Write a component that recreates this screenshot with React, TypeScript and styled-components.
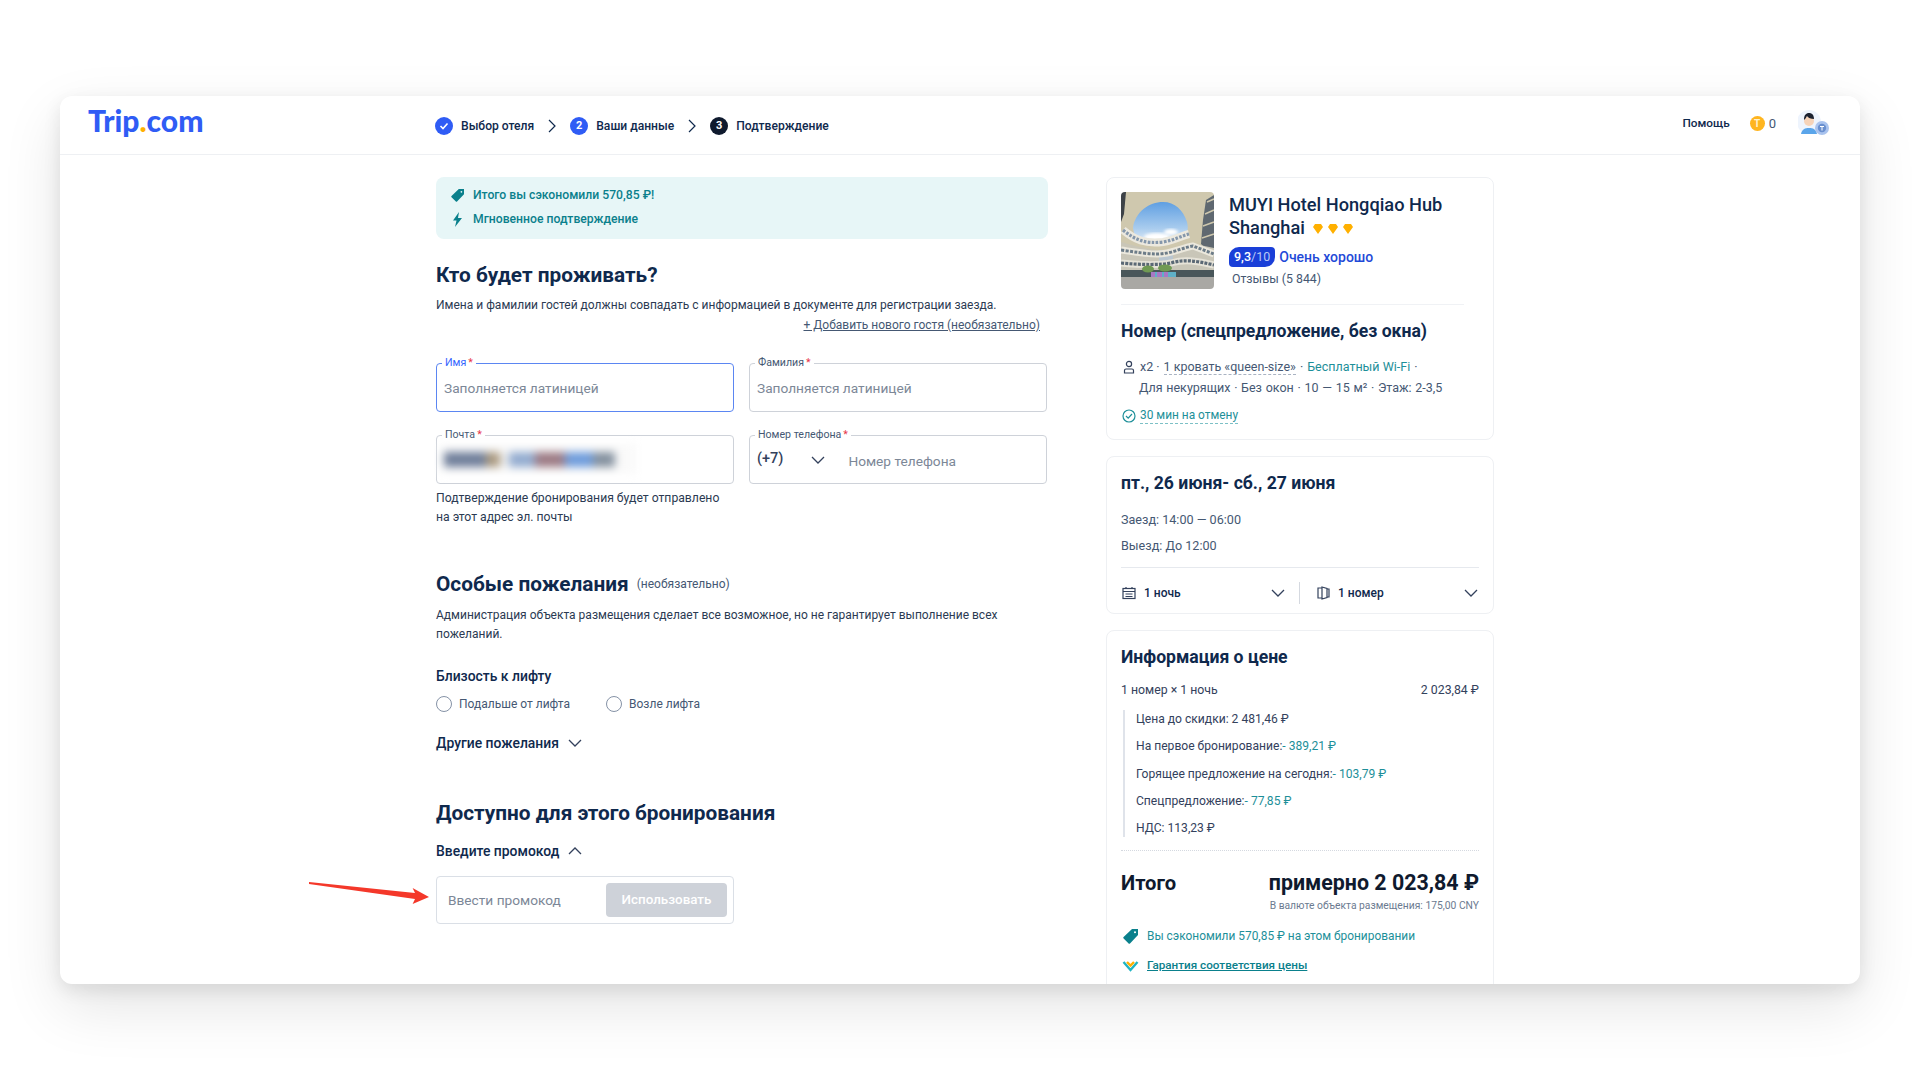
import React from 'react';
import styled, { createGlobalStyle } from 'styled-components';

const GlobalStyle = createGlobalStyle`
  html, body {
    margin: 0;
    padding: 0;
    height: 1080px;
    overflow: hidden;
    background: #fff;
    font-family: "Roboto", "Noto Sans", sans-serif;
    color: #0f294d;
  }
  * { box-sizing: border-box; }
`;

const Page = styled.div`
  padding: 96px 60px 0;
`;

const Window = styled.div`
  position: relative;
  height: 888px;
  background: #fff;
  border-radius: 12px;
  box-shadow: 0 6px 18px rgba(0, 0, 0, 0.09), 0 22px 60px rgba(0, 0, 0, 0.11);
  overflow: hidden;
`;

const Header = styled.header`
  display: flex;
  align-items: center;
  height: 59px;
  padding: 0 28px;
  border-bottom: 1px solid #eef0f3;
`;

const Logo = styled.div`
  width: 347px;
  margin-top: -10px;
  font: 900 30px/36px "Lato", sans-serif;
  color: #2f5cf5;
  span { color: #ffb000; }
`;

const Steps = styled.nav`
  display: flex;
  align-items: center;
  margin-top: 1px;
`;

const StepBadge = styled.span<{ $dark?: boolean }>`
  display: flex;
  align-items: center;
  justify-content: center;
  width: 18px;
  height: 18px;
  margin-right: 8px;
  border-radius: 50%;
  background: ${p => (p.$dark ? '#0f1a2e' : '#2f5cf5')};
  color: #fff;
  font-size: 11px;
  font-weight: 700;
`;

const StepLabel = styled.span`
  font-size: 12.1px;
  font-weight: 500;
  color: #0f294d;
`;

const StepArrow = styled.svg`
  width: 12px;
  height: 16px;
  margin: 0 12px;
  fill: none;
  stroke: #0f294d;
  stroke-width: 1.2;
`;

const HeaderRight = styled.div`
  display: flex;
  align-items: center;
  margin-left: auto;
  margin-right: 2px;
  margin-top: -4px;
`;

const Help = styled.span`
  font-size: 11.8px;
  font-weight: 500;
  margin-right: 20px;
`;

const Coin = styled.span`
  display: flex;
  align-items: center;
  justify-content: center;
  width: 15px;
  height: 15px;
  border-radius: 50%;
  background: #ffb51f;
  color: #fff3cf;
  font-size: 10px;
  font-weight: 700;
  margin-right: 4px;
`;

const CoinCount = styled.span`
  font-size: 13px;
  margin-right: 22px;
  color: #455873;
`;

const Body = styled.main`
  display: flex;
  gap: 58px;
  padding: 22px 0 0 376px;
`;

const LeftColumn = styled.section`
  width: 612px;
`;

const RightColumn = styled.aside`
  display: flex;
  flex-direction: column;
  gap: 16px;
  width: 388px;
`;

const Banner = styled.div`
  display: flex;
  flex-direction: column;
  justify-content: center;
  gap: 7px;
  height: 62px;
  padding: 0 15px 1px;
  border-radius: 8px;
  background: #e7f6f7;
`;

const BannerRow = styled.div`
  display: flex;
  align-items: center;
  gap: 9px;
  font-size: 12.2px;
  line-height: 17px;
  font-weight: 500;
  color: #0a808c;
`;

const BannerIcon = styled.svg`
  width: 13px;
  height: 15px;
  fill: #0a808c;
`;

const Heading = styled.h2<{ $top: number }>`
  margin: ${p => p.$top}px 0 0;
  font-size: 20.8px;
  line-height: 28px;
  font-weight: 700;
  color: #0f294d;
`;

const Text = styled.p<{ $top: number }>`
  margin: ${p => p.$top}px 0 0;
  font-size: 12px;
  line-height: 19px;
  color: #2b3a52;
`;

const AddGuest = styled.a`
  display: block;
  margin: 1px 8px 0 0;
  text-align: right;
  font-size: 12px;
  line-height: 19px;
  color: #455873;
  text-decoration: underline;
`;

const FieldGrid = styled.div`
  display: grid;
  grid-template-columns: 298px 298px;
  gap: 23px 15px;
  margin-top: 27.5px;
`;

const Field = styled.div<{ $active?: boolean }>`
  position: relative;
  display: flex;
  align-items: center;
  height: 49px;
  padding: 2px 7px 0;
  border: 1px solid ${p => (p.$active ? '#5b86f2' : '#ced2d9')};
  border-radius: 4px;
  font-size: 13.7px;
  color: #7c8797;
`;

const FieldLabel = styled.label<{ $active?: boolean }>`
  position: absolute;
  top: -8px;
  left: 5px;
  padding: 0 3px;
  background: #fff;
  font-size: 10.6px;
  line-height: 14px;
  color: ${p => (p.$active ? '#3264ff' : '#455873')};
  i { font-style: normal; color: #e8364a; margin-left: 2px; }
`;

const Blurred = styled.div`
  display: flex;
  align-items: center;
  width: 196px;
  height: 30px;
  padding: 0 4px;
  margin: -2px 0 0 -4px;
  background: #fafafa;
  filter: blur(4px);
`;

const BlurSpot = styled.span<{ $w: number; $c: string }>`
  flex: 0 0 ${p => p.$w}px;
  height: 15px;
  background: ${p => p.$c};
`;

const PhoneCode = styled.span`
  font-size: 14.5px;
  font-weight: 500;
  color: #33415c;
  margin-top: -4px;
`;

const PhonePlaceholder = styled.span`
  margin: 2px 0 0 23px;
`;

const Chevron = styled.svg<{ $left?: number }>`
  flex: none;
  width: 14px;
  height: 10px;
  margin-left: ${p => p.$left ?? 0}px;
  fill: none;
  stroke: #33415c;
  stroke-width: 1.3;
`;

const EmailNote = styled.p`
  width: 298px;
  margin: 5px 0 0;
  font-size: 12.2px;
  line-height: 19px;
  color: #2b3a52;
`;

const OptionalHeading = styled.div`
  display: flex;
  align-items: center;
  gap: 8px;
  margin-top: 43px;
  h2 { margin: 0; font-size: 20.8px; line-height: 28px; font-weight: 700; color: #0f294d; }
  span { font-size: 12px; color: #455873; }
`;

const Label = styled.div<{ $top: number }>`
  display: flex;
  align-items: center;
  gap: 9px;
  margin-top: ${p => p.$top}px;
  font-size: 13.9px;
  line-height: 20px;
  font-weight: 500;
  color: #0f294d;
`;

const RadioRow = styled.div`
  display: flex;
  gap: 36px;
  margin-top: 9px;
`;

const Radio = styled.label`
  display: flex;
  align-items: center;
  gap: 7px;
  font-size: 12px;
  line-height: 18px;
  color: #455873;
  &::before {
    content: '';
    width: 14px;
    height: 14px;
    border: 1px solid #8592a6;
    border-radius: 50%;
  }
`;

const PromoBox = styled.div`
  display: flex;
  align-items: center;
  justify-content: space-between;
  width: 298px;
  height: 48px;
  margin-top: 15px;
  padding: 0 6px 0 11px;
  border: 1px solid #dadfe6;
  border-radius: 4px;
  font-size: 13.7px;
  color: #7c8797;
`;

const PromoButton = styled.button`
  width: 121px;
  height: 34px;
  border: none;
  border-radius: 4px;
  background: #ced2d9;
  color: #fff;
  font: 500 13.4px "Roboto", sans-serif;
`;

const RedArrow = styled.svg`
  position: absolute;
  left: 245px;
  top: 780px;
  width: 130px;
  height: 30px;
`;

const Card = styled.div<{ $bottom: number }>`
  padding: 14px 14px ${p => p.$bottom}px;
  background: #fff;
  border: 1px solid #eef0f3;
  border-radius: 8px;
`;

const HotelRow = styled.div`
  display: flex;
  gap: 15px;
  padding-bottom: 15px;
  margin-right: 15px;
  border-bottom: 1px solid #f0f2f5;
`;

const Photo = styled.svg`
  flex: none;
  width: 93px;
  height: 97px;
  border-radius: 4px;
`;

const HotelInfo = styled.div`
  display: flex;
  flex-direction: column;
  align-items: flex-start;
`;

const HotelName = styled.div`
  margin-top: 1px;
  font-size: 18.2px;
  line-height: 23px;
  font-weight: 500;
  color: #0f294d;
  svg { width: 41px; height: 10px; margin-left: 8px; fill: #ffb000; }
`;

const Rating = styled.div`
  display: flex;
  align-items: center;
  gap: 4px;
  margin-top: 8px;
  font-size: 14px;
  font-weight: 500;
  color: #1f4ad8;
`;

const RatingBadge = styled.span`
  padding: 0 5px;
  height: 20px;
  line-height: 20px;
  border-radius: 10px 4px 10px 4px;
  background: #1a3fd8;
  color: #fff;
  font-size: 12.5px;
  font-weight: 500;
  small { font-size: 12.5px; font-weight: 400; color: #b9c7f5; }
`;

const Reviews = styled.div`
  margin: 3px 0 0 3px;
  font-size: 12.3px;
  line-height: 18px;
  color: #455873;
`;

const CardTitle = styled.h3<{ $top?: number }>`
  margin: ${p => p.$top ?? 0}px 0 0;
  font-size: 17.6px;
  line-height: 24px;
  font-weight: 700;
  color: #0f294d;
`;

const RoomRow = styled.div<{ $top: number; $indent?: boolean }>`
  display: flex;
  align-items: center;
  gap: 4px;
  margin-top: ${p => p.$top}px;
  padding-left: ${p => (p.$indent ? 18 : 1)}px;
  font-size: 12.5px;
  line-height: 18px;
  word-spacing: ${p => (p.$indent ? 0.6 : 0)}px;
  color: #455873;
  white-space: nowrap;
  b { font-weight: 400; color: #1d8f99; }
  u { text-decoration: none; border-bottom: 1px dashed #a9b3c2; line-height: 15px; }
`;

const RowIcon = styled.svg<{ $teal?: boolean }>`
  flex: none;
  width: 14px;
  height: 14px;
  fill: none;
  stroke: ${p => (p.$teal ? '#1d8f99' : '#33415c')};
  stroke-width: 1.2;
`;

const CancelLink = styled.span`
  font-size: 11.9px;
  color: #1d8f99;
  line-height: 15px;
  border-bottom: 1px dashed #7cc0c6;
`;

const Muted = styled.div<{ $top: number }>`
  margin-top: ${p => p.$top}px;
  font-size: 12.6px;
  line-height: 18px;
  color: #455873;
`;

const Rule = styled.div<{ $top: number; $dotted?: boolean }>`
  margin-top: ${p => p.$top}px;
  border-top: 1px ${p => (p.$dotted ? 'dotted #d5d9e0' : 'solid #e6e9ee')};
`;

const SelectRow = styled.div`
  display: flex;
  align-items: center;
  margin-top: 14px;
  font-size: 12px;
  line-height: 22px;
  font-weight: 500;
  color: #0f294d;
`;

const SelectCell = styled.div<{ $width: number; $pad: number }>`
  display: flex;
  align-items: center;
  gap: 8px;
  width: ${p => p.$width}px;
  padding: 0 0 0 ${p => p.$pad}px;
  svg:last-child { margin-left: auto; }
`;

const SelectDivider = styled.span`
  width: 1px;
  height: 22px;
  margin: 0 14px;
  background: #d5d9e0;
`;

const SpaceRow = styled.div`
  display: flex;
  justify-content: space-between;
  margin-top: 12px;
  font-size: 12.3px;
  line-height: 18px;
  color: #33415c;
`;

const Breakdown = styled.div`
  margin: 11px 0 0 2px;
  padding-left: 11px;
  border-left: 2px solid #dfe3ea;
`;

const BreakdownRow = styled.div`
  height: 27.3px;
  font-size: 12.1px;
  line-height: 18px;
  color: #33415c;
  &:last-child { height: 18px; }
  b { font-weight: 400; color: #1d8f99; }
`;

const TotalRow = styled.div`
  display: flex;
  justify-content: space-between;
  align-items: baseline;
  margin-top: 18px;
  font-size: 21.4px;
  line-height: 28px;
  font-weight: 700;
  color: #0f1a2e;
  span:first-child { font-size: 20.2px; }
`;

const Currency = styled.div`
  margin-top: 2px;
  text-align: right;
  font-size: 10.3px;
  line-height: 14px;
  color: #6b7a90;
`;

const SavingRow = styled.div<{ $top: number }>`
  display: flex;
  align-items: center;
  gap: 8px;
  margin-top: ${p => p.$top}px;
  padding-left: 1px;
  font-size: 11.9px;
  line-height: 18px;
  color: #1d8f99;
  svg { flex: none; width: 17px; height: 15px; }
  a { font-size: 11.7px; font-weight: 500; color: #0a808c; text-decoration: underline; }
`;

const ChevronDown = ({ left }: { left?: number }) => (
  <Chevron $left={left} viewBox="0 0 14 10">
    <path d="M1 2l6 6 6-6" />
  </Chevron>
);

const ChevronUp = ({ left }: { left?: number }) => (
  <Chevron $left={left} viewBox="0 0 14 10">
    <path d="M1 8l6-6 6 6" />
  </Chevron>
);

const Arrow = () => (
  <StepArrow viewBox="0 0 12 16">
    <path d="M3 2l6 6-6 6" />
  </StepArrow>
);

const TagPath = 'M9 0h6v6l-8 8.5a1 1 0 0 1-1.4 0L.6 9.4a1 1 0 0 1 0-1.4zm3 2.2a1 1 0 1 0 0 2 1 1 0 0 0 0-2z';

const HotelPhoto = () => (
  <Photo viewBox="0 0 93 97">
    <defs>
      <linearGradient id="sky" x1="0" y1="0" x2="0" y2="1">
        <stop offset="0" stopColor="#5f9fe2" />
        <stop offset="0.6" stopColor="#a9ccee" />
        <stop offset="1" stopColor="#eef3f8" />
      </linearGradient>
      <filter id="soft"><feGaussianBlur stdDeviation="1.4" /></filter>
      <filter id="photo"><feGaussianBlur stdDeviation="0.4" /></filter>
    </defs>
    <g filter="url(#photo)">
      <rect width="93" height="97" fill="#cfc8ae" />
      <path d="M12 36C14 20 28 10 42 10c12 0 20 8 24 20 2 8 0 14-6 16l-20 8-26-8z" fill="url(#sky)" />
      <ellipse cx="36" cy="45" rx="13" ry="4" fill="#fff" filter="url(#soft)" />
      <ellipse cx="50" cy="40" rx="7" ry="3" fill="#fff" filter="url(#soft)" />
      <path d="M0 0h5L3 22 0 30z" fill="#3e4347" />
      <path d="M93 3l-8 5-3 20-2 24 13 12z" fill="#5e6870" />
      <path d="M86 10l7-3M84 22l9-4M82 34l11-4M81 46l12-4" stroke="#cfc8ae" strokeWidth="1.5" fill="none" />
      <path d="M0 50l14 4 30 6 30-8 19 4v30H0z" fill="#c9c6b8" />
      <path d="M2 38c12 10 22 14 40 12 12-2 18-6 26-8" stroke="#ece9df" strokeWidth="8" fill="none" />
      <path d="M2 38c12 10 22 14 40 12 12-2 18-6 26-8" stroke="#8597ab" strokeWidth="3.2" strokeDasharray="2.6 1.4" fill="none" />
      <rect x="38" y="58" width="14" height="16" fill="#b9c6d0" />
      <path d="M0 58c14 2 26 4 36 4 14 0 24-6 36-8l21 8" stroke="#ebe8dd" strokeWidth="7" fill="none" />
      <path d="M0 58c14 2 26 4 36 4 14 0 24-6 36-8l21 8" stroke="#6c7b88" strokeWidth="3" strokeDasharray="3 1.4" fill="none" />
      <path d="M0 71c20 2 40 2 50 0 14-4 26-2 43 2" stroke="#e6e3d8" strokeWidth="7" fill="none" />
      <path d="M0 71c20 2 40 2 50 0 14-4 26-2 43 2" stroke="#5a6874" strokeWidth="3.2" strokeDasharray="3 1.2" fill="none" />
      <rect x="0" y="78" width="93" height="7" fill="#4a575a" />
      <ellipse cx="27" cy="77" rx="6" ry="3.5" fill="#6f9a52" />
      <ellipse cx="44" cy="76" rx="7" ry="3.5" fill="#6f9a52" />
      <path d="M30 80h4v5h-4zM36 80h5v5h-5zM43 80h4v5h-4z" fill="#a878c4" />
      <path d="M34 80h2v5h-2zM41 80h2v5h-2zM47 80h8v5h-8z" fill="#5fb0c8" />
      <rect x="0" y="85" width="93" height="12" fill="#a9a8a4" />
    </g>
  </Photo>
);

export default function App() {
  return (
    <>
      <GlobalStyle />
      <Page>
        <Window>
          <Header>
            <Logo>Trip<span>.</span>com</Logo>
            <Steps>
              <StepBadge>
                <svg width="10" height="10" viewBox="0 0 10 10" fill="none" stroke="#fff" strokeWidth="1.6">
                  <path d="M1.5 5l2.5 2.5 4.5-5" />
                </svg>
              </StepBadge>
              <StepLabel>Выбор отеля</StepLabel>
              <Arrow />
              <StepBadge>2</StepBadge>
              <StepLabel>Ваши данные</StepLabel>
              <Arrow />
              <StepBadge $dark>3</StepBadge>
              <StepLabel>Подтверждение</StepLabel>
            </Steps>
            <HeaderRight>
              <Help>Помощь</Help>
              <Coin>T</Coin>
              <CoinCount>0</CoinCount>
              <svg width="32" height="28" viewBox="0 0 32 28">
                <circle cx="11" cy="13" r="12" fill="#eef4fd" />
                <path d="M3 25c1-5 4-6 8-6s7 1 8 6z" fill="#5aa5ea" />
                <circle cx="11" cy="12" r="5" fill="#f6d3b8" />
                <path d="M6 11c0-5 2-7 5-7s5 2 5 6c-3 0-6-1-7-3-1 2-2 3-3 4z" fill="#1c2230" />
                <circle cx="24" cy="19" r="7" fill="#a9c3ee" />
                <circle cx="24" cy="19" r="4.2" fill="#6a90cf" />
                <path d="M22 17.5h4M24 17.5v4" stroke="#fff" strokeWidth="1" />
              </svg>
            </HeaderRight>
          </Header>
          <Body>
            <LeftColumn>
              <Banner>
                <BannerRow>
                  <BannerIcon viewBox="0 0 15 15"><path fillRule="evenodd" d={TagPath} /></BannerIcon>
                  Итого вы сэкономили 570,85 ₽!
                </BannerRow>
                <BannerRow>
                  <BannerIcon viewBox="0 0 13 15"><path d="M8 0L2 8.5h3.5L4 15l7-9H7z" /></BannerIcon>
                  Мгновенное подтверждение
                </BannerRow>
              </Banner>
              <Heading $top={22}>Кто будет проживать?</Heading>
              <Text $top={7}>Имена и фамилии гостей должны совпадать с информацией в документе для регистрации заезда.</Text>
              <AddGuest>+ Добавить нового гостя (необязательно)</AddGuest>
              <FieldGrid>
                <Field $active>
                  <FieldLabel $active>Имя<i>*</i></FieldLabel>
                  Заполняется латиницей
                </Field>
                <Field>
                  <FieldLabel>Фамилия<i>*</i></FieldLabel>
                  Заполняется латиницей
                </Field>
                <Field>
                  <FieldLabel>Почта<i>*</i></FieldLabel>
                  <Blurred>
                    <BlurSpot $w={42} $c="#6f7e9a" />
                    <BlurSpot $w={14} $c="#ab9a80" />
                    <BlurSpot $w={9} $c="#f0f0f0" />
                    <BlurSpot $w={26} $c="#93acd0" />
                    <BlurSpot $w={30} $c="#9c7a84" />
                    <BlurSpot $w={28} $c="#6e9cdc" />
                    <BlurSpot $w={22} $c="#84919f" />
                  </Blurred>
                </Field>
                <Field>
                  <FieldLabel>Номер телефона<i>*</i></FieldLabel>
                  <PhoneCode>(+7)</PhoneCode>
                  <ChevronDown left={28} />
                  <PhonePlaceholder>Номер телефона</PhonePlaceholder>
                </Field>
              </FieldGrid>
              <EmailNote>Подтверждение бронирования будет отправлено на этот адрес эл. почты</EmailNote>
              <OptionalHeading>
                <h2>Особые пожелания</h2>
                <span>(необязательно)</span>
              </OptionalHeading>
              <Text $top={8.5}>Администрация объекта размещения сделает все возможное, но не гарантирует выполнение всех пожеланий.</Text>
              <Label $top={21.5}>Близость к лифту</Label>
              <RadioRow>
                <Radio>Подальше от лифта</Radio>
                <Radio>Возле лифта</Radio>
              </RadioRow>
              <Label $top={20}>Другие пожелания <ChevronDown /></Label>
              <Heading $top={46}>Доступно для этого бронирования</Heading>
              <Label $top={14}>Введите промокод <ChevronUp /></Label>
              <PromoBox>
                Ввести промокод
                <PromoButton>Использовать</PromoButton>
              </PromoBox>
            </LeftColumn>
            <RightColumn>
              <Card $bottom={15}>
                <HotelRow>
                  <HotelPhoto />
                  <HotelInfo>
                    <HotelName>
                      MUYI Hotel Hongqiao Hub<br />Shanghai
                      <svg viewBox="0 0 41 10">
                        <path d="M2 0h6l2 3-5 7-5-7zM17 0h6l2 3-5 7-5-7zM32 0h6l2 3-5 7-5-7z" />
                      </svg>
                    </HotelName>
                    <Rating>
                      <RatingBadge>9,3<small>/10</small></RatingBadge>
                      Очень хорошо
                    </Rating>
                    <Reviews>Отзывы (5 844)</Reviews>
                  </HotelInfo>
                </HotelRow>
                <CardTitle $top={14}>Номер (спецпредложение, без окна)</CardTitle>
                <RoomRow $top={15}>
                  <RowIcon viewBox="0 0 14 14">
                    <circle cx="7" cy="4" r="2.6" />
                    <path d="M2.5 13v-2.5a1.5 1.5 0 0 1 1.5-1.5h6a1.5 1.5 0 0 1 1.5 1.5V13z" />
                  </RowIcon>
                  x2 · <u>1 кровать «queen-size»</u> · <b>Бесплатный Wi-Fi</b> ·
                </RoomRow>
                <RoomRow $top={3} $indent>Для некурящих · Без окон · 10 — 15 м² · Этаж: 2-3,5</RoomRow>
                <RoomRow $top={11}>
                  <RowIcon $teal viewBox="0 0 14 14">
                    <circle cx="7" cy="7" r="6" />
                    <path d="M4 7l2.2 2.2L10 5" />
                  </RowIcon>
                  <CancelLink>30 мин на отмену</CancelLink>
                </RoomRow>
              </Card>
              <Card $bottom={9}>
                <CardTitle>пт., 26 июня- сб., 27 июня</CardTitle>
                <Muted $top={16}>Заезд: 14:00 — 06:00</Muted>
                <Muted $top={8}>Выезд: До 12:00</Muted>
                <Rule $top={12} />
                <SelectRow>
                  <SelectCell $width={164} $pad={1}>
                    <RowIcon viewBox="0 0 14 14">
                      <rect x="1" y="2.5" width="12" height="10" />
                      <path d="M1 5.5h12M4 1v2M10 1v2M3.5 8h7M3.5 10.5h7" />
                    </RowIcon>
                    1 ночь
                    <ChevronDown />
                  </SelectCell>
                  <SelectDivider />
                  <SelectCell $width={164} $pad={2}>
                    <RowIcon viewBox="0 0 14 14">
                      <path d="M6 2H2v10h4M6 1l5 1.5v9L6 13zM11 3h2v8h-2" />
                    </RowIcon>
                    1 номер
                    <ChevronDown />
                  </SelectCell>
                </SelectRow>
              </Card>
              <Card $bottom={40}>
                <CardTitle>Информация о цене</CardTitle>
                <SpaceRow><span>1 номер × 1 ночь</span><span>2 023,84 ₽</span></SpaceRow>
                <Breakdown>
                  <BreakdownRow>Цена до скидки: 2 481,46 ₽</BreakdownRow>
                  <BreakdownRow>На первое бронирование:<b>- 389,21 ₽</b></BreakdownRow>
                  <BreakdownRow>Горящее предложение на сегодня:<b>- 103,79 ₽</b></BreakdownRow>
                  <BreakdownRow>Спецпредложение:<b>- 77,85 ₽</b></BreakdownRow>
                  <BreakdownRow>НДС: 113,23 ₽</BreakdownRow>
                </Breakdown>
                <Rule $top={13} $dotted />
                <TotalRow><span>Итого</span><span>примерно 2 023,84 ₽</span></TotalRow>
                <Currency>В валюте объекта размещения: 175,00 CNY</Currency>
                <SavingRow $top={14}>
                  <svg viewBox="0 0 15 15" fill="#0a808c"><path fillRule="evenodd" d={TagPath} /></svg>
                  Вы сэкономили 570,85 ₽ на этом бронировании
                </SavingRow>
                <SavingRow $top={11}>
                  <svg viewBox="0 0 17 15" fill="none" strokeWidth="2.4">
                    <path d="M1.5 4l7 8 7-8" stroke="#1fb5c4" />
                    <path d="M5 4l3.5 3.5L12 4" stroke="#ffb000" />
                  </svg>
                  <a>Гарантия соответствия цены</a>
                </SavingRow>
              </Card>
            </RightColumn>
          </Body>
          <RedArrow viewBox="0 0 130 30">
            <path d="M4 6L110 17 107.6 12 124 21 107.6 28 110 23 4 8z" fill="#f4382a" />
          </RedArrow>
        </Window>
      </Page>
    </>
  );
}
